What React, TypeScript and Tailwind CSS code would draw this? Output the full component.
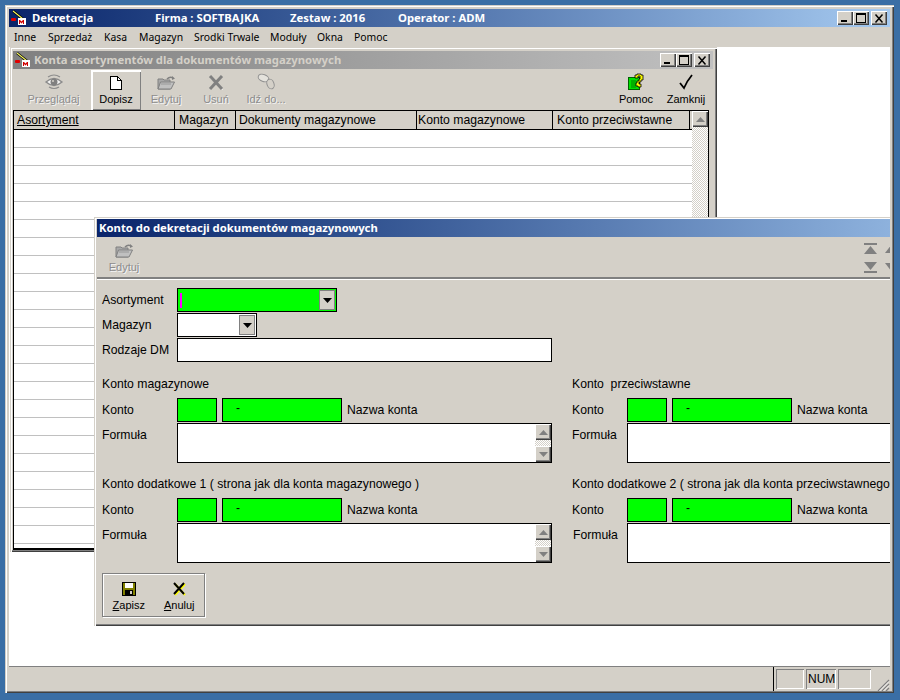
import type { ReactNode } from 'react';

const RAISED = 'shadow-[inset_1px_1px_0_#fff,inset_-1px_-1px_0_#404040,inset_-2px_-2px_0_#808080]';
const WINDOW = 'shadow-[inset_1px_1px_0_#d4d0c8,inset_2px_2px_0_#fff,inset_-1px_-1px_0_#404040,inset_-2px_-2px_0_#808080]';
const SUNKEN = 'shadow-[inset_1px_1px_0_#808080,inset_-1px_-1px_0_#fff]';
const TITLE_FONT = "[font-family:'Noto_Sans',sans-serif] text-[11.3px] font-bold";
const CHECKER = 'bg-[repeating-conic-gradient(#d4d0c8_0%_25%,#fff_0%_50%)] bg-[length:2px_2px]';

function AppIcon() {
  return (
    <svg width="16" height="16" viewBox="0 0 16 16" className="shrink-0">
      <path d="M2 1l10 8" stroke="#000" strokeWidth="2.4" />
      <path d="M2 1l10 8" stroke="#ffff60" strokeWidth="1.1" />
      <rect x="0" y="8" width="5" height="3" rx="1" fill="#e00000" />
      <rect x="7" y="8" width="8" height="7" fill="#fff" />
      <path d="M8 14v-4h1l1.500 1.500 1.500-1.500h1v4h-1v-2l-1.500 1.500-1.500-1.500v2z" fill="#d00000" />
    </svg>
  );
}

function WinButtons() {
  return (
    <div className="ml-auto mr-[3px] flex items-center">
      <div className={`${RAISED} flex h-[14px] w-[16px] items-end justify-center bg-[#d4d0c8] pb-[3px]`}>
        <div className="mr-[2px] h-[2px] w-[6px] bg-black" />
      </div>
      <div className={`${RAISED} flex h-[14px] w-[16px] items-center justify-center bg-[#d4d0c8]`}>
        <div className="h-[10px] w-[10px] border border-t-2 border-black" />
      </div>
      <div className={`${RAISED} ml-[2px] flex h-[14px] w-[16px] items-center justify-center bg-[#d4d0c8]`}>
        <svg width="10" height="9" viewBox="0 0 10 9">
          <path d="M1.500 0.500l7 8M8.500 0.500l-7 8" stroke="#000" strokeWidth="1.500" fill="none" />
        </svg>
      </div>
    </div>
  );
}

function EyeIcon() {
  return (
    <svg width="18" height="16" viewBox="0 0 18 16">
      <path d="M1 8q8-7 16 0q-8 7-16 0z" fill="#f4f4f4" stroke="#8c8c8c" strokeWidth="1.5" />
      <path d="M3 3q6-4 12 0M4 13q5 3 10 0" fill="none" stroke="#8c8c8c" strokeWidth="1.2" />
      <circle cx="9" cy="8" r="3.5" fill="#808080" />
      <circle cx="8" cy="7" r="1" fill="#d4d0c8" />
    </svg>
  );
}

function PageIcon() {
  return (
    <svg width="12" height="14" viewBox="0 0 12 14" shapeRendering="crispEdges">
      <path d="M0.500 0.500h7l4 4v9h-11z" fill="#fff" stroke="#000" />
      <path d="M7.500 0.500v4h4" fill="none" stroke="#000" />
    </svg>
  );
}

function FolderIcon() {
  return (
    <svg width="18" height="14" viewBox="0 0 18 14">
      <path d="M1 3h5l1 1h6v9h-12z" fill="#a8a8a8" stroke="#808080" />
      <path d="M1 13l2.500-7h14l-3.500 7z" fill="#c0c0c0" stroke="#808080" />
      <path d="M4.500 8h9" stroke="#707070" strokeDasharray="1 1" />
      <path d="M10 3q3-3 6-1" fill="none" stroke="#808080" strokeWidth="1.500" />
      <path d="M15 0l3 2.500-3 1.500z" fill="#808080" />
    </svg>
  );
}

function GreyX() {
  return (
    <svg width="16" height="15" viewBox="0 0 16 15">
      <path d="M2.500 2.500l12 12" stroke="#fff" strokeWidth="1.500" />
      <path d="M2 1l12 13" stroke="#808080" strokeWidth="3" />
      <path d="M14 1l-12 13" stroke="#808080" strokeWidth="3" />
    </svg>
  );
}

function LinkIcon() {
  return (
    <svg width="19" height="17" viewBox="0 0 19 17" fill="none">
      <ellipse cx="6.5" cy="5" rx="5.5" ry="3.5" transform="rotate(20 6.5 5)" fill="#e4e2dc" stroke="#909090" />
      <ellipse cx="13.5" cy="11" rx="3.5" ry="5" transform="rotate(-20 13.5 11)" fill="#d4d0c8" stroke="#909090" />
    </svg>
  );
}

function HelpIcon() {
  return (
    <svg width="16" height="17" viewBox="0 0 16 17">
      <rect x="0.5" y="4.5" width="11" height="12" fill="#00e000" stroke="#006000" />
      <path d="M3 8h5M3 10h5M3 12h5M3 14h5" stroke="#008000" />
      <path d="M7 2h2v-1h4v1h2v5h-2v2h-2v2h2v3h-3v-1h-2v-3h1v-2h2v-2h1v-3h-2v2h-3z" fill="#ffff00" stroke="#000" strokeWidth="0.8" />
    </svg>
  );
}

function CheckIcon() {
  return (
    <svg width="14" height="16" viewBox="0 0 14 16">
      <path d="M1 9l4 5q3-7 8-13" fill="none" stroke="#000" strokeWidth="1.8" />
    </svg>
  );
}

function FloppyIcon() {
  return (
    <svg width="14" height="14" viewBox="0 0 14 14" shapeRendering="crispEdges">
      <rect width="14" height="14" fill="#000" />
      <rect x="1" y="1" width="12" height="12" fill="#808000" />
      <rect x="3" y="1" width="8" height="5" fill="#fff" />
      <rect x="3" y="8" width="8" height="5" fill="#000" />
      <rect x="8" y="9" width="2" height="3" fill="#d4d0c8" />
    </svg>
  );
}

function CrossIcon() {
  return (
    <svg width="15" height="14" viewBox="0 0 15 14">
      <path d="M3 2l10 11M13 2l-10 11" stroke="#ffff00" strokeWidth="2" />
      <path d="M2 1l10 11M12 1l-10 11" stroke="#000" strokeWidth="2" />
    </svg>
  );
}

function Arrow({ down, color = '#808080' }: { down?: boolean; color?: string }) {
  return (
    <svg width="9" height="5" viewBox="0 0 9 5">
      <path d={down ? 'M0 0h9l-4.5 5z' : 'M4.5 0l4.5 5h-9z'} fill={color} />
    </svg>
  );
}

function ToolButton({
  icon,
  label,
  disabled,
  active,
  className = 'w-[50px]',
}: {
  icon: ReactNode;
  label: string;
  disabled?: boolean;
  active?: boolean;
  className?: string;
}) {
  return (
    <div className={`flex h-[40px] flex-col items-center ${active ? 'shadow-[inset_1px_1px_0_#fff,inset_2px_2px_0_#fff,inset_-1px_-1px_0_#808080]' : ''} ${className}`}>
      <div className="flex h-[21px] items-end justify-center pb-px">{icon}</div>
      <span className={`mt-[1px] text-[11px] leading-[15px] ${disabled ? 'text-[#8c8c8c] [text-shadow:1px_1px_0_#f4f4f4]' : 'text-black'}`}>
        {label}
      </span>
    </div>
  );
}

function ScrollBtn({ down }: { down?: boolean }) {
  return (
    <div className={`${RAISED} flex h-[16px] w-[16px] items-center justify-center bg-[#d4d0c8]`}>
      <Arrow down={down} />
    </div>
  );
}

const HEADERS = [
  { label: 'Asortyment', cls: 'w-[161px] pl-[3px] underline' },
  { label: 'Magazyn', cls: 'w-[61px] pl-[4px]' },
  { label: 'Dokumenty magazynowe', cls: 'w-[181px] pl-[3px]' },
  { label: 'Konto magazynowe', cls: 'w-[136px] pl-px' },
  { label: 'Konto przeciwstawne', cls: 'w-[137px] pl-[4px]' },
];

const ROWS = Array.from({ length: 23 }, (_, i) => i);

function Grid() {
  return (
    <div className="flex h-[440px] w-[696px] overflow-hidden border border-b-2 border-black bg-white">
      <div className="min-w-0 flex-1">
        <div className="flex h-[19px] border-b border-black bg-[#d4d0c8]">
          {HEADERS.map((h) => (
            <div key={h.label} className={`${h.cls} border-r border-black text-[12.2px] leading-[18px] text-black`}>
              {h.label}
            </div>
          ))}
        </div>
        {ROWS.map((r) => (
          <div key={r} className="h-[18px] border-b border-[#c0c0c0]" />
        ))}
      </div>
      <div className={`w-[16px] ${CHECKER}`}>
        <ScrollBtn />
      </div>
    </div>
  );
}

function ChildWindow() {
  return (
    <div className={`${WINDOW} absolute left-px top-0 flex h-[505px] w-[707px] flex-col bg-[#d4d0c8] pl-[3px] pr-[4px] pt-[4px]`}>
      <div className="flex h-[18px] shrink-0 items-center gap-[3px] bg-gradient-to-r from-[#808080] to-[#c0c0c0] pl-[2px]">
        <AppIcon />
        <span className={`${TITLE_FONT} text-[#d4d0c8]`}>Konta asortymentów dla dokumentów magazynowych</span>
        <WinButtons />
      </div>
      <div className="flex h-[41px] shrink-0 pt-px">
        <ToolButton icon={<EyeIcon />} label="Przeglądaj" disabled className="w-[78px] pl-[3px]" />
        <ToolButton icon={<PageIcon />} label="Dopisz" active />
        <ToolButton icon={<FolderIcon />} label="Edytuj" disabled />
        <ToolButton icon={<GreyX />} label="Usuń" disabled />
        <ToolButton icon={<LinkIcon />} label="Idź do..." disabled />
        <div className="ml-auto flex pr-[2px]">
          <ToolButton icon={<HelpIcon />} label="Pomoc" />
          <ToolButton icon={<CheckIcon />} label="Zamknij" />
        </div>
      </div>
      <Grid />
    </div>
  );
}

function Combo({ width, green, caret }: { width: string; green?: boolean; caret?: boolean }) {
  return (
    <div className={`flex h-[24px] items-center justify-between border border-black pl-[2px] pr-px ${green ? 'bg-[#00ff00]' : 'bg-white'} ${width}`}>
      {caret ? <div className="h-[15px] w-[2px] bg-[#ff00ff]" /> : <div />}
      <div className="flex h-[20px] w-[16px] items-center justify-center border border-[#808080] bg-[#d4d0c8]">
        <Arrow down color="#000" />
      </div>
    </div>
  );
}

function Label({ children, className = 'w-[75px]' }: { children: ReactNode; className?: string }) {
  return <div className={`shrink-0 text-[12.2px] leading-[24px] text-black ${className}`}>{children}</div>;
}

function Section({ title, labelWidth = 'w-[75px]', formulaClass }: { title: string; labelWidth?: string; formulaClass?: string }) {
  return (
    <div className="mb-[11px] h-[89px]">
      <div className="h-[24px] whitespace-pre text-[12.2px] leading-[20px] text-black">{title}</div>
      <div className="flex h-[24px] items-center">
        <Label className={labelWidth}>Konto</Label>
        <div className="h-[24px] w-[40px] border border-black bg-[#00ff00]" />
        <div className="ml-[5px] h-[24px] w-[120px] border border-black bg-[#00ff00] pl-[13px] text-[12px] leading-[18px] text-black">-</div>
        <span className="ml-[5px] whitespace-nowrap text-[12.2px] text-black">Nazwa konta</span>
      </div>
      <div className="mt-px flex">
        <Label className={`${labelWidth} ${formulaClass ?? ''}`}>Formuła</Label>
        <div className="flex h-[40px] w-[375px] shrink-0 justify-end border border-black bg-white">
          <div className={`flex w-[16px] flex-col justify-between ${CHECKER}`}>
            <ScrollBtn />
            <ScrollBtn down />
          </div>
        </div>
      </div>
    </div>
  );
}

function SaveButton({ icon, hot, rest, width }: { icon: ReactNode; hot: string; rest: string; width: string }) {
  return (
    <div className={`flex flex-col items-center pt-[7px] ${width}`}>
      <div className="flex h-[15px] items-center">{icon}</div>
      <span className="mt-[2px] text-[11px] leading-[14px] text-black">
        <span className="underline">{hot}</span>
        {rest}
      </span>
    </div>
  );
}

function Dialog() {
  return (
    <div className="absolute left-[85px] top-[170px] flex h-[409px] w-[925px] flex-col bg-[#d4d0c8] pl-[3px] pt-[2px] shadow-[inset_1px_1px_0_#d4d0c8,inset_2px_2px_0_#fff,inset_0_-1px_0_#404040,inset_0_-2px_0_#808080]">
      <div className="flex h-[18px] shrink-0 items-center bg-gradient-to-r from-[#0a246a] to-[#a6caf0] pl-[2px]">
        <span className={`${TITLE_FONT} text-white`}>Konto do dekretacji dokumentów magazynowych</span>
      </div>
      <div className="flex h-[42px] shrink-0 border-b-2 border-b-[#808080] pt-px">
        <ToolButton icon={<FolderIcon />} label="Edytuj" disabled className="w-[54px]" />
        <div className="ml-[713px] flex w-[40px] items-start gap-[8px] pt-[5px]">
          <div className="flex w-[13px] flex-col items-center gap-[7px]">
            <div className="flex flex-col items-center">
              <div className="mb-px h-[2px] w-[13px] bg-[#808080]" />
              <svg width="13" height="9" viewBox="0 0 13 9"><path d="M6.5 0l6.5 8h-13z" fill="#808080" /></svg>
            </div>
            <div className="flex flex-col items-center">
              <svg width="13" height="9" viewBox="0 0 13 9"><path d="M0 0h13l-6.5 8z" fill="#808080" /></svg>
              <div className="h-[2px] w-[13px] bg-[#808080]" />
            </div>
          </div>
          <div className="flex w-[7px] flex-col gap-[10px] pt-px">
            <svg width="7" height="9" viewBox="0 0 7 9"><path d="M7 0v9h-7z" fill="#808080" /></svg>
            <svg width="7" height="9" viewBox="0 0 7 9"><path d="M0 0h7v9z" fill="#808080" /></svg>
          </div>
        </div>
      </div>
      <div className="border-t border-white pl-[5px] pt-[8px]">
        <div className="flex flex-col gap-px">
          <div className="flex items-center">
            <Label>Asortyment</Label>
            <Combo width="w-[160px]" green caret />
          </div>
          <div className="flex items-center">
            <Label>Magazyn</Label>
            <Combo width="w-[80px]" />
          </div>
          <div className="flex items-center">
            <Label>Rodzaje DM</Label>
            <div className="h-[24px] w-[375px] border border-black bg-white" />
          </div>
        </div>
        <div className="mt-[12px] flex">
          <div className="w-[470px] shrink-0">
            <Section title="Konto magazynowe" />
            <Section title="Konto dodatkowe 1 ( strona jak dla konta magazynowego )" />
          </div>
          <div className="w-[450px] shrink-0">
            <Section title="Konto  przeciwstawne" labelWidth="w-[55px]" />
            <Section title="Konto dodatkowe 2 ( strona jak dla konta przeciwstawnego )" labelWidth="w-[55px]" formulaClass="pl-px" />
          </div>
        </div>
        <div className="mt-[-1px] flex h-[44px] w-[103px] border border-[#808080] shadow-[1px_1px_0_#fff,inset_1px_1px_0_#fff]">
          <SaveButton icon={<FloppyIcon />} hot="Z" rest="apisz" width="w-[52px]" />
          <SaveButton icon={<CrossIcon />} hot="A" rest="nuluj" width="w-[50px]" />
        </div>
      </div>
    </div>
  );
}

function StatusBar() {
  return (
    <div className="flex h-[25px] shrink-0 items-start border-t border-t-[#808080] bg-[#d4d0c8]">
      <div className="ml-auto flex h-[24px] items-start border-l border-l-black pl-[2px] pt-[2px]">
        <div className={`${SUNKEN} h-[20px] w-[28px]`} />
        <div className={`${SUNKEN} ml-[2px] h-[20px] w-[30px] pl-[2px] text-[12px] leading-[20px] text-black`}>NUM</div>
        <div className={`${SUNKEN} ml-[2px] h-[20px] w-[33px]`} />
        <svg width="17" height="22" viewBox="0 0 17 22" className="ml-[2px]">
          <path d="M16 11l-11 11M16 15l-7 7M16 19l-3 3" stroke="#808080" strokeWidth="1.2" />
          <path d="M16 12.5l-9.5 9.5M16 16.5l-5.5 5.5" stroke="#fff" strokeWidth="0.8" />
        </svg>
      </div>
    </div>
  );
}

const MENU = [
  { label: 'Inne', cls: 'w-[34px]' },
  { label: 'Sprzedaż', cls: 'w-[56px]' },
  { label: 'Kasa', cls: 'w-[35px]' },
  { label: 'Magazyn', cls: 'w-[55px]' },
  { label: 'Srodki Trwale', cls: 'w-[76px]' },
  { label: 'Moduły', cls: 'w-[47px]' },
  { label: 'Okna', cls: 'w-[37px]' },
  { label: 'Pomoc', cls: 'w-[45px]' },
];

export default function App() {
  return (
    <div className="h-[700px] w-[900px] overflow-hidden bg-[#3a6ea5] pl-[5px] pt-[5px] [font-family:'Liberation_Sans',Arial,sans-serif]">
      <div className={`${WINDOW} flex h-[688px] w-[889px] flex-col bg-[#d4d0c8] px-[4px] pb-[2px] pt-[4px]`}>
        <div className="flex h-[18px] shrink-0 items-center bg-gradient-to-r from-[#0a246a] to-[#a6caf0] pl-[2px] text-white">
          <AppIcon />
          <span className={`${TITLE_FONT} ml-[5px] w-[123px]`}>Dekretacja</span>
          <span className={`${TITLE_FONT} w-[135px]`}>Firma : SOFTBAJKA</span>
          <span className={`${TITLE_FONT} w-[108px]`}>Zestaw : 2016</span>
          <span className={TITLE_FONT}>Operator : ADM</span>
          <WinButtons />
        </div>
        <div className="flex h-[20px] shrink-0 items-center pl-[5px] pt-px text-[10.4px] text-black [font-family:'Noto_Sans',sans-serif]">
          {MENU.map((m) => (
            <span key={m.label} className={m.cls}>{m.label}</span>
          ))}
        </div>
        <div className="relative min-h-0 flex-1 overflow-hidden bg-white">
          <ChildWindow />
          <Dialog />
        </div>
        <StatusBar />
      </div>
    </div>
  );
}
